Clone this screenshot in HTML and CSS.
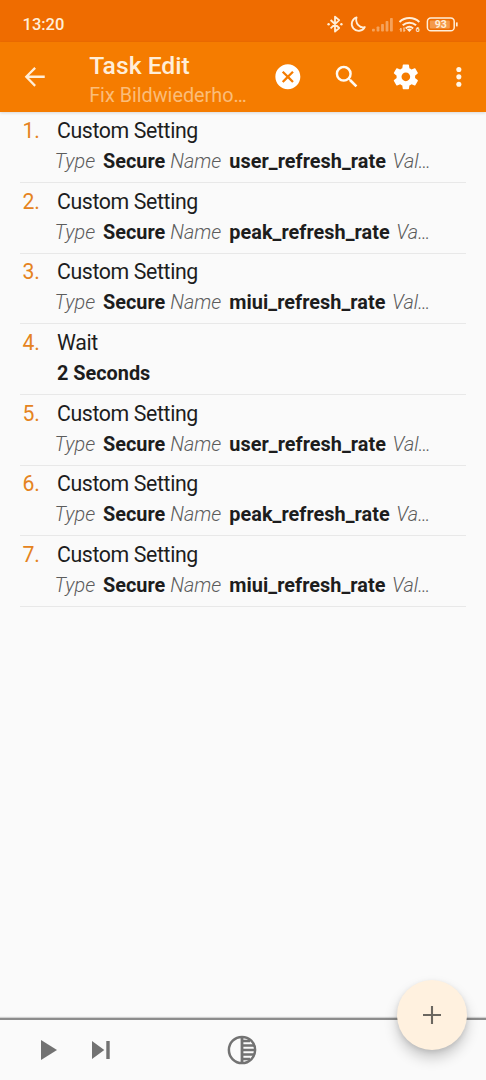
FILE: index.html
```html
<!DOCTYPE html>
<html lang="en">
<head>
<meta charset="utf-8">
<title>Task Edit</title>
<link rel="stylesheet" href="styles.css">
</head>
<body>
<div class="screen">
  <div class="status">
    <span class="clock">13:20</span>
    <svg class="tray" width="132" height="20" viewBox="0 0 132 20" fill="none" stroke="#ffeed8" stroke-width="1.8">
      <path d="M3.6 6l8.6 8-4.2 3.6V2.6l4.2 3.6-8.6 8.2" stroke-linejoin="round"/>
      <circle cx="1.6" cy="10.2" r="1.2" fill="#ffeed8" stroke="none"/><circle cx="14.4" cy="10.2" r="1.2" fill="#ffeed8" stroke="none"/>
      <path d="M29.6 3.3A6.9 6.9 0 1 0 37.8 13C32.6 14.6 27.8 9 29.6 3.3z" stroke-linejoin="round"/>
      <g fill="#ffeed8" stroke="none" opacity=".42"><rect x="45" y="14.7" width="2.8" height="2.8" rx=".8"/><rect x="49.6" y="12.5" width="2.8" height="5" rx=".8"/><rect x="54.1" y="10" width="2.8" height="7.5" rx=".8"/><rect x="58.6" y="7" width="2.8" height="10.5" rx=".8"/><rect x="63" y="4" width="2.8" height="13.5" rx=".8"/></g>
      <g stroke-width="2"><path d="M72.5 7.9c5.6-5.2 14.2-5.2 19.8 0"/><path d="M75.7 11.3c3.9-3.5 9.5-3.5 13.4 0"/><path d="M78.7 14.4c2.2-1.9 5.2-1.9 7.4 0"/></g>
      <path d="M79.9 15.4q2.5-1.6 5 0l-2.5 2.6z" fill="#ffeed8" stroke="none"/>
      <path d="M74 17.7v-3.2M73 15.4l1-1.1M77 13.5v3.8M78 16.4l-1 1.1" stroke-width="1"/>
      <text x="88.8" y="18" class="tiny">6</text>
      <rect x="100.4" y="4" width="26.8" height="12.8" rx="3.4" stroke-width="1.5"/>
      <rect x="102.8" y="6.4" width="20" height="8" rx="1" fill="#ffeed8" opacity=".35" stroke="none"/>
      <path d="M129.8 8.4v4" stroke-width="1.7"/>
      <text x="113.8" y="14.1" class="charge">93</text>
    </svg>
  </div>
  <header class="toolbar">
    <svg class="icon" viewBox="0 0 24 24" fill="#ffeed8"><path d="M20 11H7.3l5.6-5.6L11.6 4 3.8 12l7.8 8 1.3-1.4L7.3 13H20z"/></svg>
    <div class="heading"><h1>Task Edit</h1><p>Fix Bildwiederho…</p></div>
    <svg class="icon" viewBox="0 0 24 24" fill="#fff"><path d="M12 1.9C6.4 1.9 1.9 6.4 1.9 12S6.4 22.1 12 22.1 22.1 17.6 22.1 12 17.6 1.9 12 1.9zm4.8 13.6l-1.3 1.3L12 13.3l-3.5 3.5-1.3-1.3 3.5-3.5-3.5-3.5 1.3-1.3 3.5 3.5 3.5-3.5 1.3 1.3-3.5 3.5z"/></svg>
    <svg class="icon search" viewBox="0 0 24 24" fill="#fffaf2"><path d="M15.5 14h-.79l-.28-.27A6.47 6.47 0 0 0 16 9.5 6.5 6.5 0 1 0 9.5 16c1.61 0 3.09-.59 4.23-1.57l.27.28v.79l5 4.99L20.49 19l-4.99-5zm-6 0C7.01 14 5 11.99 5 9.5S7.01 5 9.5 5 14 7.01 14 9.5 11.99 14 9.5 14z"/></svg>
    <svg class="icon gear" viewBox="0 0 24 24" fill="#fff"><path d="M19.43 12.98c.04-.32.07-.64.07-.98s-.03-.66-.07-.98l2.11-1.65c.19-.15.24-.42.12-.64l-2-3.46c-.12-.22-.39-.3-.61-.22l-2.49 1c-.52-.4-1.08-.73-1.69-.98l-.38-2.65A.488.488 0 0 0 14 2h-4c-.25 0-.46.18-.49.42l-.38 2.65c-.61.25-1.17.59-1.69.98l-2.49-1c-.23-.09-.49 0-.61.22l-2 3.46c-.13.22-.07.49.12.64l2.11 1.65c-.04.32-.07.65-.07.98s.03.66.07.98l-2.11 1.65c-.19.15-.24.42-.12.64l2 3.46c.12.22.39.3.61.22l2.49-1c.52.4 1.08.73 1.69.98l.38 2.65c.03.24.24.42.49.42h4c.25 0 .46-.18.49-.42l.38-2.65c.61-.25 1.17-.59 1.69-.98l2.49 1c.23.09.49 0 .61-.22l2-3.46c.12-.22.07-.49-.12-.64l-2.11-1.65zM12 15.5c-1.93 0-3.5-1.57-3.5-3.5s1.57-3.5 3.5-3.5 3.5 1.57 3.5 3.5-1.57 3.5-3.5 3.5z"/></svg>
    <svg class="icon more" viewBox="0 0 24 24" fill="#fff6e8"><circle cx="12" cy="6" r="2.05"/><circle cx="12" cy="12" r="2.05"/><circle cx="12" cy="18" r="2.05"/></svg>
  </header>
  <main class="list">
    <div class="row"><span class="num">1.</span><div><h2>Custom Setting</h2><p class="args"><i>Type</i><b class="type">Secure</b><i>Name</i><b class="name">user_refresh_rate</b><i>Val…</i></p></div></div>
    <div class="row"><span class="num">2.</span><div><h2>Custom Setting</h2><p class="args"><i>Type</i><b class="type">Secure</b><i>Name</i><b class="name">peak_refresh_rate</b><i>Va…</i></p></div></div>
    <div class="row"><span class="num">3.</span><div><h2>Custom Setting</h2><p class="args"><i>Type</i><b class="type">Secure</b><i>Name</i><b class="name">miui_refresh_rate</b><i>Val…</i></p></div></div>
    <div class="row"><span class="num">4.</span><div><h2>Wait</h2><p class="args plain"><b>2 Seconds</b></p></div></div>
    <div class="row"><span class="num">5.</span><div><h2>Custom Setting</h2><p class="args"><i>Type</i><b class="type">Secure</b><i>Name</i><b class="name">user_refresh_rate</b><i>Val…</i></p></div></div>
    <div class="row"><span class="num">6.</span><div><h2>Custom Setting</h2><p class="args"><i>Type</i><b class="type">Secure</b><i>Name</i><b class="name">peak_refresh_rate</b><i>Va…</i></p></div></div>
    <div class="row"><span class="num">7.</span><div><h2>Custom Setting</h2><p class="args"><i>Type</i><b class="type">Secure</b><i>Name</i><b class="name">miui_refresh_rate</b><i>Val…</i></p></div></div>
  </main>
  <footer class="bottom">
    <svg class="play" width="16" height="20" viewBox="0 0 16 20" fill="#727272"><path d="M0 0l16 10L0 20z"/></svg>
    <svg class="step" width="18" height="18" viewBox="0 0 18 18" fill="#727272"><path d="M0 0l12.3 9L0 18zM14.3 0h3.4v18h-3.4z"/></svg>
    <svg class="contrast" width="30" height="30" viewBox="0 0 30 30" fill="none" stroke="#727272"><circle cx="15" cy="15" r="13.1" stroke-width="2.5"/><path d="M15 2v26" stroke-width="2.8"/><path d="M15 6h8M15 10.5h12M15 15h13M15 19.5h12M15 24h8" stroke-width="2.4"/></svg>
  </footer>
  <button class="fab" aria-label="Add"><svg width="18" height="18" viewBox="0 0 18 18"><path d="M9 0v18M0 9h18" stroke="#6b6760" stroke-width="2.1"/></svg></button>
</div>
</body>
</html>
```
FILE: styles.css
```css
* { box-sizing: border-box; }
body { margin: 0; font-family: Roboto, sans-serif; background: #fafafa; }
h1, h2, p { margin: 0; font-weight: 400; }
svg { display: block; flex: none; }
.screen { position: relative; display: flex; flex-direction: column; width: 486px; height: 1080px; overflow: hidden; }
.status { display: flex; justify-content: space-between; height: 42px; padding: 14px 27px 0 22.5px; background: #ef6c00; }
.clock { font-size: 16.5px; line-height: 22px; font-weight: 500; color: #ffeed8; }
.tray { overflow: visible; }
.tiny { font-size: 7px; font-weight: 700; fill: #ffeed8; stroke: none; }
.charge { font-size: 10.5px; font-weight: 700; fill: #ffeed8; stroke: none; text-anchor: middle; }
.toolbar { display: flex; align-items: center; height: 69.5px; padding: 0 12px 0 20px; background: #f57c00; box-shadow: 0 1px 3px rgba(0,0,0,.14); z-index: 1; }
.icon { width: 29.7px; height: 29.7px; }
.heading { width: 183.6px; margin-left: 39.5px; padding-top: 7px; white-space: nowrap; }
.heading h1 { font-size: 24.7px; line-height: 30px; font-weight: 500; color: #ffeed8; }
.heading p { font-size: 19.8px; line-height: 29px; color: #fbbd79; }
.search { margin-left: 29.6px; }
.gear { margin-left: 29.7px; }
.more { margin-left: 22.5px; }
.list { flex: 1; padding: 1px 20px 0; }
.row { display: flex; height: 70.67px; padding: 4.4px 0 0 2.5px; border-bottom: 1px solid #e8e8e8; }
.num { width: 34.5px; font-size: 21.2px; line-height: 28px; letter-spacing: -.2px; color: #e58320; }
.row h2 { font-size: 21.3px; line-height: 28px; letter-spacing: -.38px; color: #1d1d1d; }
.args { display: flex; margin: 1px 0 0 -2.5px; font-size: 19.85px; line-height: 31px; white-space: nowrap; color: #1d1d1d; }
.args i { font-weight: 300; color: #5c5c5c; }
.args b { font-weight: 700; }
.args.plain { margin-left: 0; }
.type { margin: 0 5px 0 8px; }
.name { margin: 0 6.5px 0 8px; letter-spacing: .04px; }
.bottom { display: flex; align-items: center; height: 61.6px; padding: 0 0 0 40.5px; border-top: 2px solid #8c8c8c; box-shadow: 0 -1px 1px #d0d0d0; }
.step { margin-left: 35.7px; }
.contrast { margin-left: 117.3px; }
.fab { position: absolute; left: 396.5px; top: 980.2px; display: grid; place-items: center; width: 70px; height: 70px; padding: 0; border: 0; border-radius: 50%; background: #fff1df; box-shadow: 0 8px 14px rgba(0,0,0,.2), 0 2px 5px rgba(0,0,0,.1); }
```
